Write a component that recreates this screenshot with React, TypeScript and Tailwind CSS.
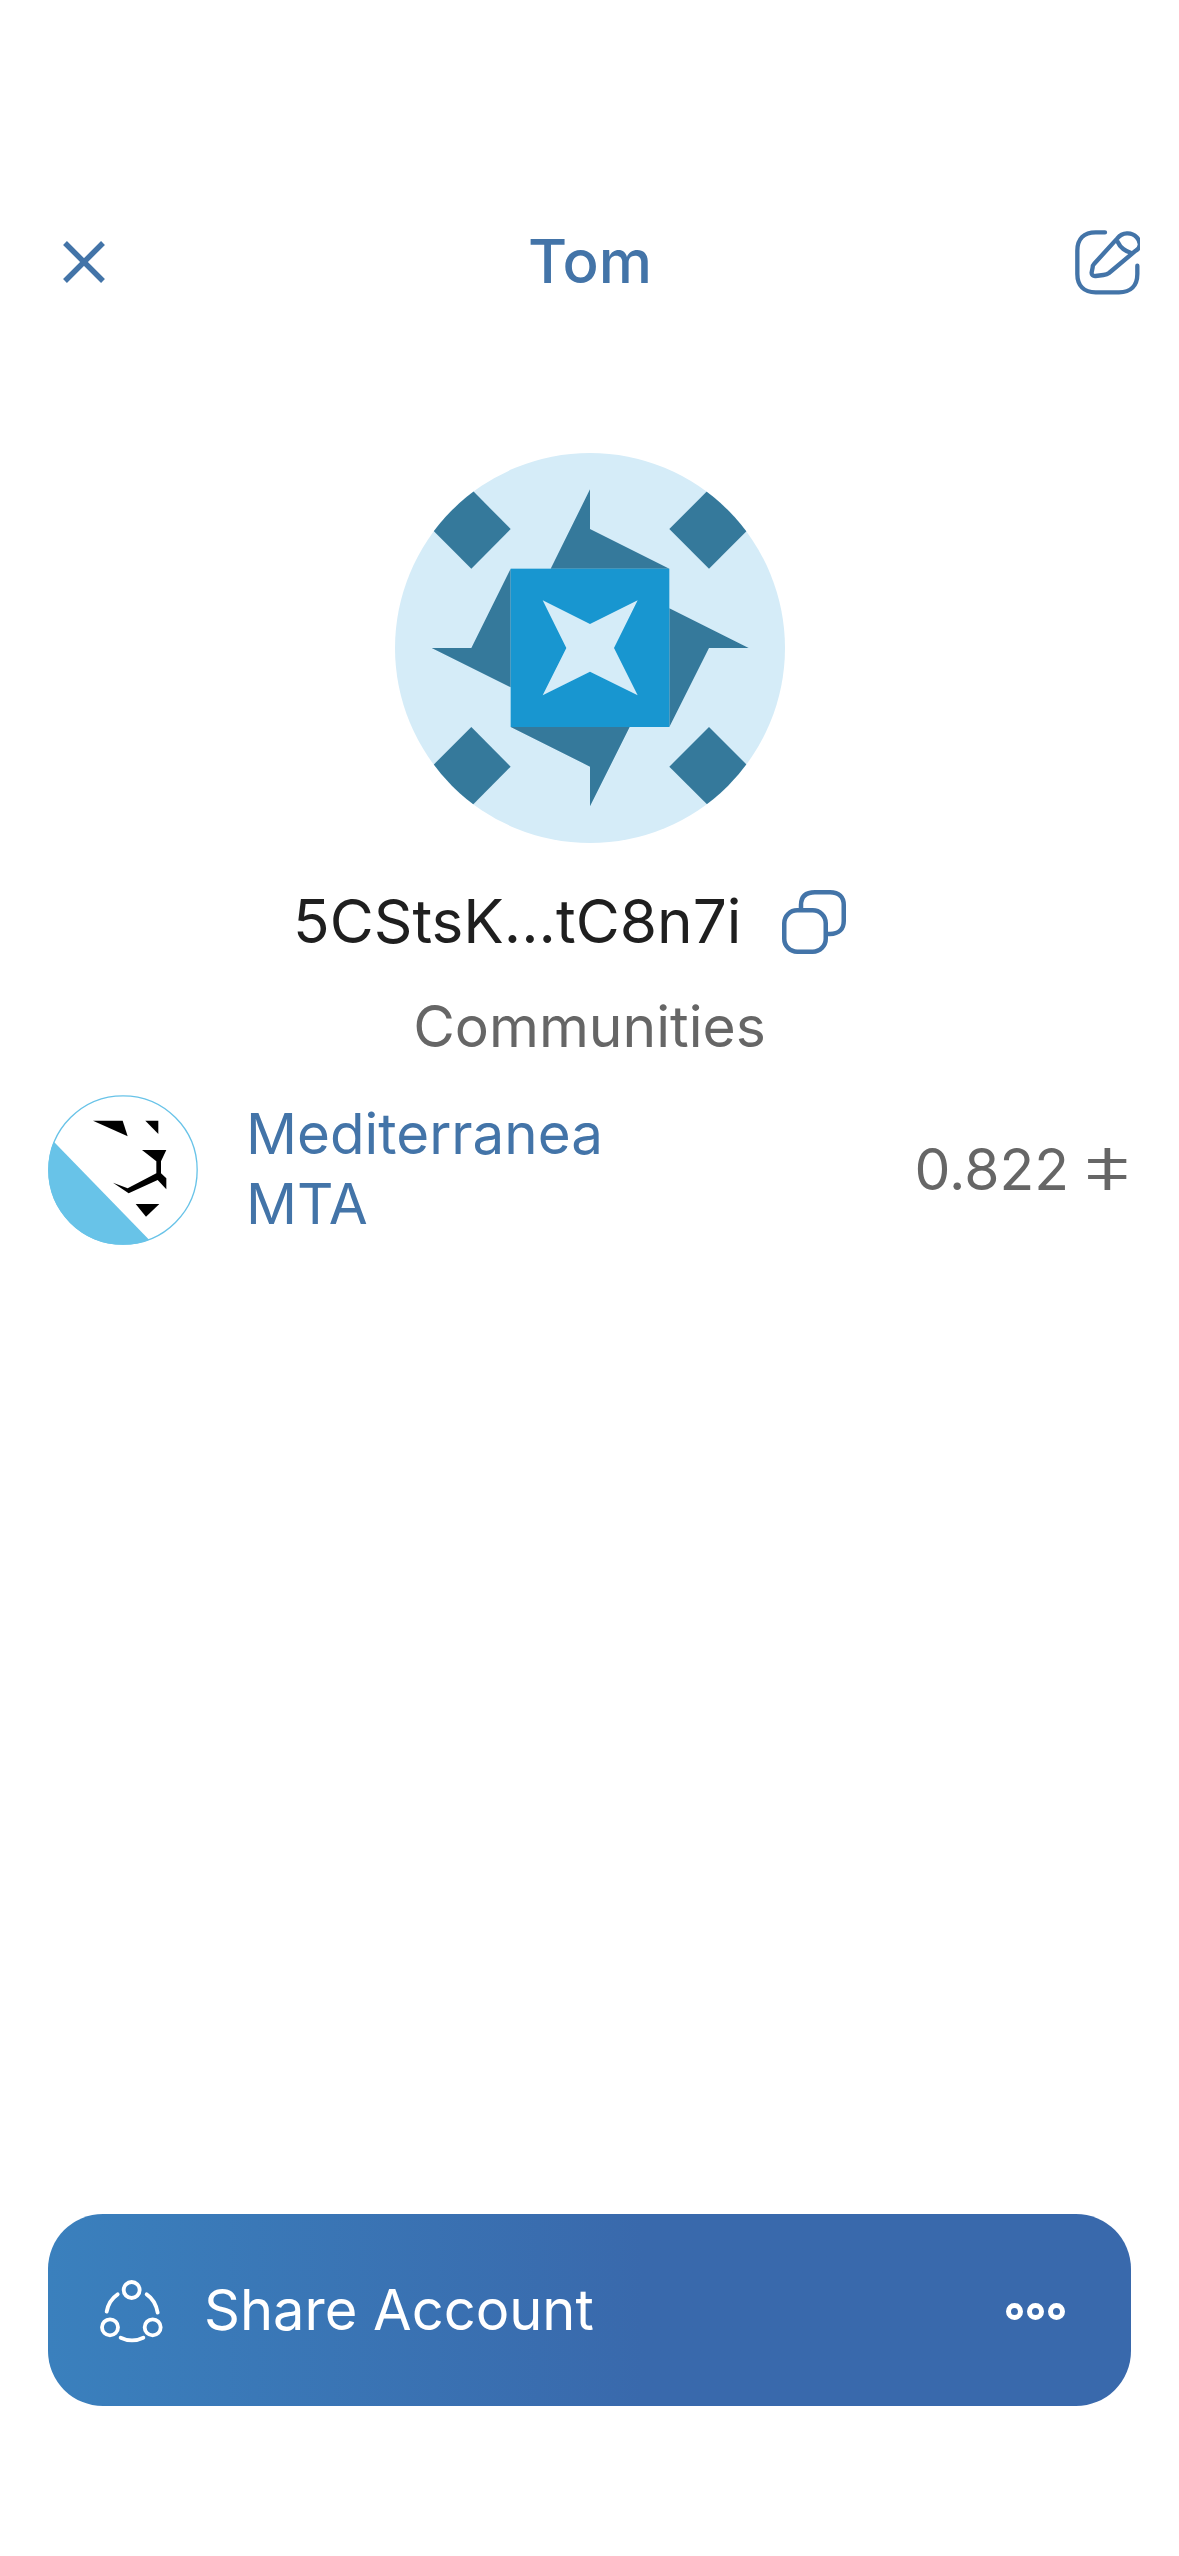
import React from "react";

const blue = "#4374a8";

function CloseIcon() {
  return (
    <svg width="44" height="44" viewBox="0 0 44 44" fill="none" stroke={blue} strokeWidth="5.5">
      <path d="M3 3L41 41M41 3L3 41" />
    </svg>
  );
}

function EditIcon() {
  return (
    <svg width="66" height="66" viewBox="40 40 198 198" fill="none" stroke={blue} strokeWidth="13" strokeLinecap="round" strokeLinejoin="round">
      <path d="M133 50H105C70 50 50 70 50 105V175C50 210 70 230 105 230H175C210 230 230 210 230 175V150" />
      <path d="M100 145L170 68C185 50 212 48 228 65C242 80 240 98 225 105L145 172C140 176 135 177 128 178L105 181C97 182 92 177 93 170L96 155C96 150 97 148 100 145Z" />
      <path d="M172 80C178 95 195 108 212 112" />
    </svg>
  );
}

function Identicon() {
  return (
    <svg width="400" height="400" viewBox="28 24 1200 1200">
      <defs>
        <clipPath id="avatar-circle">
          <circle cx="628" cy="624" r="585" />
        </clipPath>
      </defs>
      <g clipPath="url(#avatar-circle)">
        <rect x="28" y="24" width="1200" height="1200" fill="#d5ecf8" />
        <g fill="#35799b">
          <path d="M272 148L390 267L272 386L153 267Z" />
          <path d="M985 148L1104 267L985 386L866 267Z" />
          <path d="M272 861L390 980L272 1099L153 980Z" />
          <path d="M985 861L1104 980L985 1099L866 980Z" />
          <path d="M628 148V267L866 386H510Z" />
          <path d="M1104 624H985L866 861V505Z" />
          <path d="M628 1099V980L390 861H747Z" />
          <path d="M153 624H272L390 386V742Z" />
        </g>
        <rect x="390" y="386" width="476" height="475" fill="#1896d0" />
        <path d="M486 481L628 552L771 481L700 624L771 766L628 695L486 766L557 624Z" fill="#d5ecf8" />
      </g>
    </svg>
  );
}

function CopyIcon() {
  return (
    <svg width="64" height="64" viewBox="0 0 64 64" fill="none" stroke={blue} strokeWidth="4.5">
      <path d="M19 18V15C19 6 24 2.25 33 2.25H48C57 2.25 61.75 7 61.75 15V31C61.75 39 57 44 48 44H44" />
      <rect x="2.25" y="20.25" width="41.5" height="41.5" rx="13" />
    </svg>
  );
}

function LionLogo() {
  return (
    <svg width="150" height="150" viewBox="0 0 450 450">
      <defs>
        <clipPath id="lion-circle">
          <circle cx="225" cy="225" r="224.5" />
        </clipPath>
      </defs>
      <circle cx="225" cy="225" r="222.5" fill="#fff" stroke="#68c3e8" strokeWidth="4" />
      <path d="M19 142L304 435L200 470L-20 400V142Z" fill="#68c3e8" clipPath="url(#lion-circle)" />
      <g fill="#000">
        <path d="M135 77H224L239 124Z" />
        <path d="M292 77H331V117Z" />
        <path d="M282 165H355L339 199V235L355 250V283L329 255L242 295L195 263L239 280L325 235V199Z" />
        <path d="M263 327H334L294 365Z" />
      </g>
    </svg>
  );
}

function ShareIcon() {
  return (
    <svg width="90" height="90" viewBox="0 0 270 270" fill="none" stroke="#fff" strokeWidth="11.5" strokeLinecap="round">
      <circle cx="140" cy="75" r="24" />
      <circle cx="75" cy="187" r="24" />
      <circle cx="203" cy="187" r="24" />
      <path d="M98 88C80 100 69 118 65 140" />
      <path d="M185 88C203 100 214 120 218 143" />
      <path d="M107 218C128 228 154 228 175 218" />
    </svg>
  );
}

function MoreIcon() {
  return (
    <div className="flex items-center gap-[4px] mt-[2px]">
      <div className="w-[17px] h-[17px] rounded-full border-[5.5px] border-white" />
      <div className="w-[17px] h-[17px] rounded-full border-[5.5px] border-white" />
      <div className="w-[17px] h-[17px] rounded-full border-[5.5px] border-white" />
    </div>
  );
}

function App() {
  return (
    <div className="w-[1179px] h-[2556px] bg-white flex flex-col font-['Inter',sans-serif]">
      <div className="flex items-center justify-between h-[68px] mt-[228px] pl-[62px] pr-[39px]">
        <CloseIcon />
        <div className="text-[60px] font-medium text-[#4374a8] pb-[2px]">Tom</div>
        <EditIcon />
      </div>

      <div className="flex justify-center mt-[152px] h-[400px]">
        <Identicon />
      </div>

      <div className="flex items-center gap-[41px] mt-[34px] h-[80px] pl-[293px]">
        <div className="text-[60.3px] text-[#1f1f1f]">5CStsK...tC8n7i</div>
        <CopyIcon />
      </div>

      <div className="text-center text-[57px] leading-[70px] text-[#666666] mt-[30px]">Communities</div>

      <div className="flex items-center mt-[33px] pl-[48px] pr-[50px]">
        <LionLogo />
        <div className="flex flex-col ml-[48px] text-[56.5px] leading-[70px] text-[#4374a8] pb-[3px]">
          <div>Mediterranea</div>
          <div>MTA</div>
        </div>
        <div className="ml-auto text-[57px] text-[#666666]">0.822 ⵐ</div>
      </div>

      <div className="mt-auto mb-[150px] mx-[48px] h-[192px] rounded-[55px] flex items-center pl-[37px] pr-[66px] bg-gradient-to-r from-[#3a80bd] to-[#3969ac] to-[55%]">
        <ShareIcon />
        <div className="ml-[29px] text-[56px] text-white">Share Account</div>
        <div className="ml-auto">
          <MoreIcon />
        </div>
      </div>
    </div>
  );
}

export default App;
